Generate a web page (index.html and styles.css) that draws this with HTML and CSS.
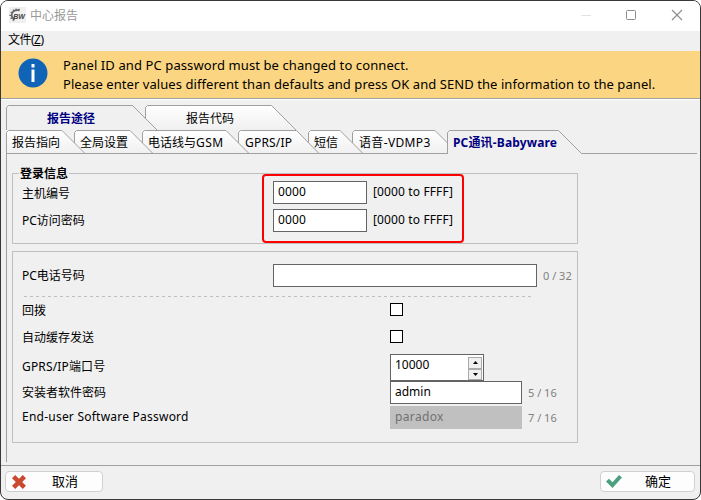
FILE: index.html
```html
<!DOCTYPE html>
<html lang="zh-CN">
<head>
<meta charset="utf-8">
<title>中心报告</title>
<link rel="stylesheet" href="styles.css">
</head>
<body>
<div class="window">
  <header class="titlebar">
    <svg class="logo" width="17" height="16" viewBox="0 0 17 16">
      <rect width="17" height="16" fill="#f0f0f0"/>
      <path d="M10.500 3.400C6 2.400 2.700 4.500 2.700 8c0 2.200 1.200 3.800 3 4.600" fill="none" stroke="#666" stroke-width="1.600"/>
      <path d="M5.200 4.500 4 2.600M7.300 3.500 7 1.500M9.800 3.300l.6-1.500M3.500 6 1.600 5M3 8.300H.4M3.500 10.500 1.600 11.600M5 12.200 4 13.800" stroke="#666" stroke-width="1.300"/>
      <text x="4.200" y="11.600" class="logo-text">BW</text>
    </svg>
    <span class="title">中心报告</span>
    <svg class="controls" width="106" height="12" viewBox="0 0 106 12">
      <path d="M1 6.500H11" stroke="#e2e2e2"/>
      <rect x="46.500" y="1.500" width="9" height="9" rx="1" fill="none" stroke="#8c8c8c"/>
      <path d="M92 1 102 11M102 1 92 11" stroke="#8c8c8c" stroke-width="1.100"/>
    </svg>
  </header>
  <nav class="menu"><span>文件(<u>Z</u>)</span></nav>
  <section class="banner">
    <svg width="30" height="30" viewBox="0 0 30 30">
      <circle cx="15" cy="15" r="14.500" fill="#1064b8"/>
      <rect x="13.500" y="6" width="3" height="3.500" fill="#fff"/>
      <rect x="13.500" y="11.500" width="3" height="12.500" fill="#fff"/>
    </svg>
    <div class="banner-text">
      <p class="line-one">Panel ID and PC password must be changed to connect.</p>
      <p class="line-two">Please enter values different than defaults and press OK and SEND the information to the panel.</p>
    </div>
  </section>
  <main class="content">
    <div class="tabs">
      <svg class="tab-shapes" width="691" height="49" viewBox="0 0 691 49">
        <defs>
          <linearGradient id="face" x1="0" y1="0" x2="0" y2="1"><stop offset="0" stop-color="#fff"/><stop offset="1" stop-color="#f0f0f0"/></linearGradient>
        </defs>
        <g stroke="#a0a0a0">
          <path fill="url(#face)" d="M139.500 25V2.500l2-2H265.500L290 25"/>
          <path fill="#f0f0f0" d="M.5 25V2.500l2-2H126.500L151 25"/>
          <path fill="url(#face)" d="M346.500 48.500V27.500l2-2H429L441.500 38V48.500"/>
          <path fill="url(#face)" d="M302.500 48.500V27.500l2-2H334L357 48.500"/>
          <path fill="url(#face)" d="M232.500 48.500V27.500l2-2H290.500L313 48.500"/>
          <path fill="url(#face)" d="M136.500 48.500V27.500l2-2H220L243 48.500"/>
          <path fill="url(#face)" d="M68.500 48.500V27.500l2-2H124L147 48.500"/>
          <path fill="url(#face)" d="M.5 48.500V27.500l2-2H56L79 48.500"/>
          <path fill="none" d="M0 48.500H441.500"/>
          <path fill="#f0f0f0" d="M441.500 49V27.500l2-2H552.500L575.500 48.500H691"/>
          <path stroke="#f0f0f0" d="M442 48.500H575"/>
        </g>
      </svg>
      <div class="tab-row top-row">
        <span class="selected">报告途径</span><span>报告代码</span>
      </div>
      <div class="tab-row sub-row">
        <span>报告指向</span><span>全局设置</span><span>电话线与<i class="gsm">GSM</i></span><span class="gprs">GPRS/IP</span><span>短信</span><span class="voice">语音-VDMP3</span><span class="selected pc">PC通讯-Babyware</span>
      </div>
    </div>
    <div class="page">
      <fieldset class="group login">
        <legend>登录信息</legend>
        <div class="row first"><label>主机编号</label><div class="input short">0000</div><span class="range">[0000 to FFFF]</span></div>
        <div class="row"><label>PC访问密码</label><div class="input short">0000</div><span class="range">[0000 to FFFF]</span></div>
        <div class="highlight"></div>
      </fieldset>
      <div class="group details">
        <div class="row phone"><label>PC电话号码</label><div class="input long"></div><span class="count">0 / 32</span></div>
        <div class="divider"></div>
        <div class="row wide check"><label>回拨</label><span class="checkbox"></span></div>
        <div class="row wide check"><label>自动缓存发送</label><span class="checkbox"></span></div>
        <div class="row wide port"><label>GPRS/IP端口号</label>
          <div class="spin"><span>10000</span>
            <div class="arrows">
              <b><svg width="5" height="3" viewBox="0 0 5 3"><path d="M0 3 2.500 0 5 3z"/></svg></b>
              <b><svg width="5" height="3" viewBox="0 0 5 3"><path d="M0 0 2.500 3 5 0z"/></svg></b>
            </div>
          </div>
        </div>
        <div class="row wide"><label>安装者软件密码</label><div class="input medium">admin</div><span class="count">5 / 16</span></div>
        <div class="row wide user"><label class="user-label">End-user Software Password</label><div class="input medium disabled">paradox</div><span class="count">7 / 16</span></div>
      </div>
    </div>
  </main>
  <footer class="footer">
    <div class="button cancel">
      <svg width="14" height="14" viewBox="0 0 14 14"><path d="M3.200 0 7 3.800 10.800 0 14 3.200 10.200 7 14 10.800 10.800 14 7 10.200 3.200 14 0 10.800 3.800 7 0 3.200z" fill="#ca4a31"/></svg>
      <span>取消</span>
    </div>
    <div class="button ok">
      <svg width="16" height="13" viewBox="0 0 16 13"><path d="M0 6.500 3 3.800 6.500 7.200 13 0 16 2.500 6.500 13z" fill="#4ba080"/></svg>
      <span>确定</span>
    </div>
  </footer>
</div>
</body>
</html>
```

FILE: styles.css
```css
* { box-sizing: border-box; }
body {
  margin: 0;
  background: #fff;
  color: #000;
  font: 12px/16px "Noto Sans", "Noto Sans CJK SC", sans-serif;
  white-space: nowrap;
}
svg { display: block; flex: none; }
p { margin: 0; }
i { font-style: normal; }

.window {
  width: 701px;
  height: 500px;
  display: flex;
  flex-direction: column;
  border: 1px solid #383838;
  border-radius: 8px;
  background: #f0f0f0;
  overflow: hidden;
}

.titlebar {
  height: 30px;
  display: flex;
  align-items: center;
  padding: 0 10px 0 8px;
  background: #fff;
  color: #999;
}
.logo { margin-bottom: 2px; }
.logo-text { font: bold italic 7px "Liberation Sans", sans-serif; fill: #444; }
.title { margin-left: 4px; }
.controls { margin: 0 4px 2px auto; }

.menu { height: 20px; padding: 1px 7px; }
.menu span { letter-spacing: -0.5px; }

.banner {
  height: 48px;
  display: flex;
  padding: 7px 16px 0 17px;
  background: #fbd582;
  border-bottom: 1px solid #a0a0a0;
  box-shadow: 0 1px #fff;
}
.banner-text { margin-left: 15px; font-size: 13px; line-height: 19px; margin-top: -2px; }
.line-one { letter-spacing: 0.1px; }
.line-two { letter-spacing: 0.065px; }

.content { height: 366px; padding: 6px 4px 0 5px; }

.tabs { position: relative; height: 49px; }
.tab-shapes { position: absolute; left: 0; top: 0; }
.tab-row { position: relative; display: grid; line-height: 24px; }
.tab-row .selected { color: #000080; font-weight: bold; }
.top-row { height: 25px; padding: 2px 0 0 41px; grid-template-columns: 139px 100px; }
.sub-row { height: 24px; padding: 1px 0 0 6px; grid-template-columns: 68px 68px 97px 69px 45px 94px 140px; }
.gsm { letter-spacing: 0.5px; }
.gprs { letter-spacing: 0.2px; }
.voice { letter-spacing: 0.35px; }
.pc { letter-spacing: 0.15px; }

.page { height: 308px; padding: 19px 0 0 5px; border-left: 1px solid #a0a0a0; }
.group { width: 566px; margin: 0; border: 1px solid #bfbfbf; }
.login { position: relative; height: 71px; padding: 7px 0 0 9px; min-width: 0; }
.login legend {
  float: left;
  height: 13px;
  padding: 0 1px;
  margin: -14px 0 -1px -3px;
  background: #f0f0f0;
  font-weight: bold;
  line-height: 13px;
}
.login .row { clear: both; }
.row { display: grid; grid-template-columns: 251px max-content max-content; height: 28px; }
.row.wide { grid-template-columns: 368px max-content max-content; height: 25px; }
.row label { line-height: 23px; }
.row.first label { line-height: 25px; }
.input {
  height: 23px;
  padding: 0 4px;
  border: 1px solid #646464;
  background: #fff;
  line-height: 20px;
}
.short { width: 94px; letter-spacing: 0.15px; }
.long { width: 264px; }
.medium { width: 132px; }
.disabled { background: #c0c0c0; border-color: #c0c0c0; color: #707070; letter-spacing: 0.35px; }
.range { margin-left: 6px; line-height: 21px; letter-spacing: 0.13px; }
.count { margin-left: 6px; color: #808080; font-size: 11px; line-height: 24px; }
.highlight {
  position: absolute;
  left: 249px;
  top: 0;
  width: 202px;
  height: 69px;
  border: 2px solid #f00;
  border-radius: 4px;
}

.details { height: 192px; margin-top: 7px; padding: 12px 0 0 9px; }
.row.phone { height: 32px; }
.divider {
  width: 508px;
  height: 1px;
  margin: 0 0 -1px 2px;
  background: repeating-linear-gradient(90deg, #bfbfbf 0 3px, transparent 3px 6px);
}
.row.check { height: 27px; align-items: center; }
.row.check label { padding-top: 2px; }
.checkbox { width: 13px; height: 13px; border: 1px solid #000; background: #fff; }
.row.port { height: 31px; padding-top: 4px; }
.port label { line-height: 25px; letter-spacing: 0.15px; }
.spin {
  width: 94px;
  height: 27px;
  display: flex;
  justify-content: space-between;
  padding-left: 4px;
  border: 1px solid #646464;
  background: #fff;
  line-height: 20px;
}
.arrows { display: flex; flex-direction: column; margin: 2px 1px 0 0; }
.arrows b {
  width: 14px;
  height: 12px;
  display: grid;
  place-items: center;
  background: #f0f0f0;
  border: 1px solid #aaa;
}
.user .user-label { letter-spacing: 0.23px; line-height: 22px; }

.footer {
  height: 34px;
  display: flex;
  justify-content: space-between;
  padding: 5px 5px 0 4px;
  border-top: 1px solid #a0a0a0;
}
.button {
  height: 21px;
  display: flex;
  align-items: center;
  border: 1px solid #d0d0d0;
  border-radius: 4px;
  background: #fdfdfd;
  font-size: 13px;
}
.button span { margin-top: -1px; }
.cancel { width: 98px; padding-left: 6px; }
.cancel span { margin-left: 26px; }
.ok { width: 95px; padding-left: 5px; }
.ok span { margin-left: 23px; }
```
